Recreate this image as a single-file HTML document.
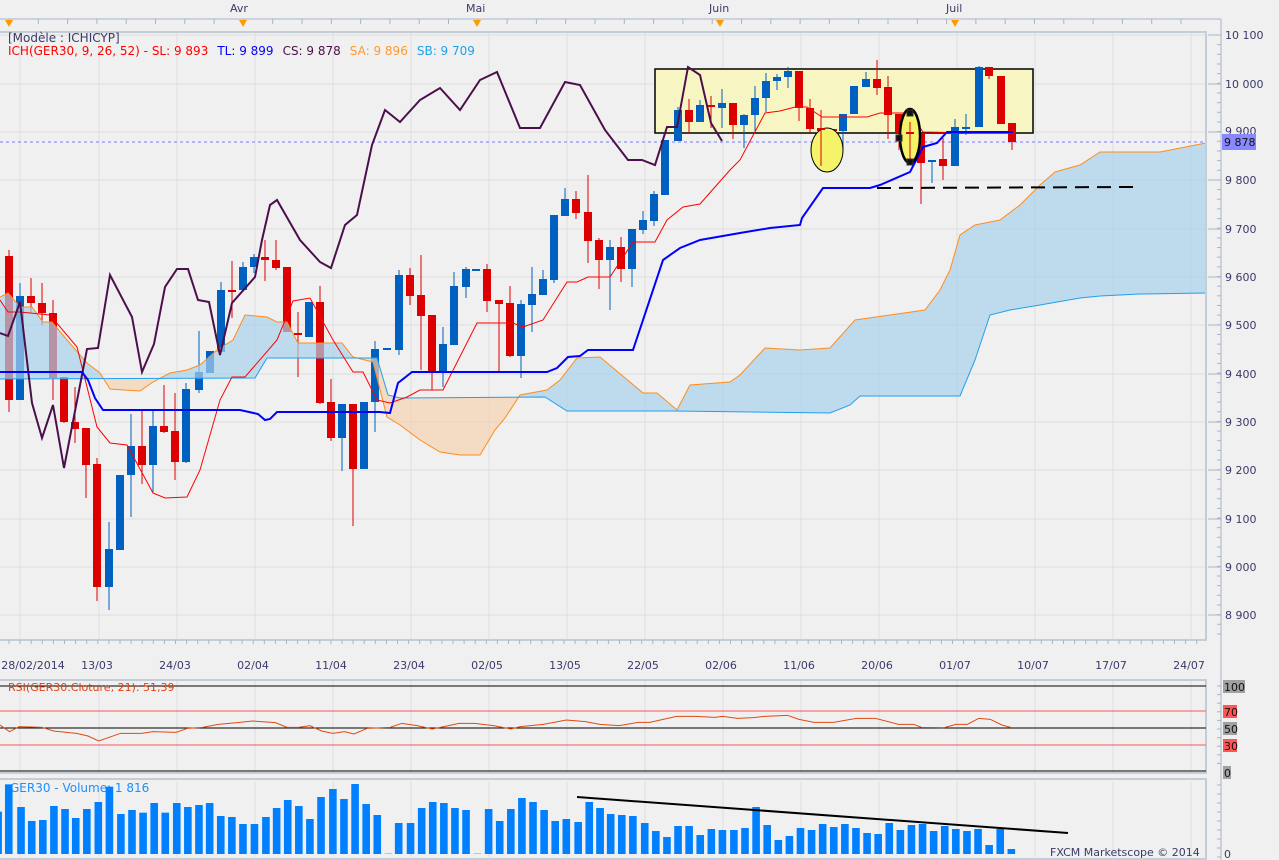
<!DOCTYPE html>
<html><head><meta charset="utf-8"><style>
html,body{margin:0;padding:0;background:#f0f0f0;width:1279px;height:860px;overflow:hidden}
svg{display:block;font-family:"DejaVu Sans","Liberation Sans",sans-serif}
</style></head><body>
<svg id="s" width="1279" height="860" viewBox="0 0 1279 860" xmlns="http://www.w3.org/2000/svg">
<defs>
<clipPath id="plot"><rect x="0" y="32" width="1206" height="608"/></clipPath>
</defs>
<rect width="1279" height="860" fill="#f0f0f0"/>
<g id="grid"></g>
<g clip-path="url(#plot)" id="pg">
<g id="cloud"></g>
<g id="candles"></g>
<g id="lines"></g>
<g id="ann"></g>
</g>
<g id="axes"></g>
<g font-size="11" fill="#3a3a6a">
<text x="230" y="12">Avr</text><text x="466" y="12">Mai</text><text x="709" y="12">Juin</text><text x="946" y="12">Juil</text>
</g>
<text x="8" y="42" font-size="12" fill="#3a3a6a">[Modèle : ICHICYP]</text>
<text y="55" font-size="12"><tspan x="8" fill="#ff0000">ICH(GER30, 9, 26, 52) -  SL: 9 893</tspan><tspan dx="9" fill="#0000ff">TL: 9 899</tspan><tspan dx="9" fill="#4b0f4b">CS: 9 878</tspan><tspan dx="9" fill="#ff9933">SA: 9 896</tspan><tspan dx="9" fill="#1ea0ef">SB: 9 709</tspan></text>
<g font-size="11" fill="#3a3a6a" id="plabels"></g>
<g font-size="11" fill="#3a3a6a" text-anchor="middle">
<text x="33" y="669">28/02/2014</text><text x="97" y="669">13/03</text><text x="175" y="669">24/03</text><text x="253" y="669">02/04</text><text x="331" y="669">11/04</text><text x="409" y="669">23/04</text><text x="487" y="669">02/05</text><text x="565" y="669">13/05</text><text x="643" y="669">22/05</text><text x="721" y="669">02/06</text><text x="799" y="669">11/06</text><text x="877" y="669">20/06</text><text x="955" y="669">01/07</text><text x="1033" y="669">10/07</text><text x="1111" y="669">17/07</text><text x="1189" y="669">24/07</text>
</g>
<rect x="1222" y="134" width="34" height="16" fill="#8888ff"/>
<text x="1224" y="146" font-size="11" fill="#111">9 878</text>
<rect x="1223" y="680" width="22" height="13" fill="#a0a0a0"/><text x="1224" y="691" font-size="11" fill="#111">100</text>
<rect x="1223" y="705" width="14" height="13" fill="#ff5555"/><text x="1224" y="716" font-size="11" fill="#111">70</text>
<rect x="1223" y="722" width="14" height="13" fill="#a0a0a0"/><text x="1224" y="733" font-size="11" fill="#111">50</text>
<rect x="1223" y="739" width="14" height="13" fill="#ff5555"/><text x="1224" y="750" font-size="11" fill="#111">30</text>
<rect x="1223" y="766" width="8" height="13" fill="#a0a0a0"/><text x="1224" y="777" font-size="11" fill="#111">0</text>
<text x="1224" y="858" font-size="11" fill="#3a3a6a">0</text>
<text x="8" y="691" font-size="11" fill="#e04010">RSI(GER30.Cloture, 21): 51,39</text>
<text x="10" y="792" font-size="12" fill="#1e8fff">GER30 - Volume: 1 816</text>
<g id="vol"></g>
<text x="1050" y="856" font-size="11" fill="#3a3a6a">FXCM Marketscope © 2014</text>
</svg>
<script>
var NS="http://www.w3.org/2000/svg";
function el(p,t,a){var e=document.createElementNS(NS,t);for(var k in a)e.setAttribute(k,a[k]);document.getElementById(p).appendChild(e);return e;}
function pts(a){return a.map(function(p){return p[0]+","+p[1]}).join(" ");}
var vx=[20,99,177,255,333,411,489,567,645,723,801,879,957,1035,1113,1191];
vx.forEach(function(x){el("grid","line",{x1:x,y1:32,x2:x,y2:640,stroke:"#dedede"});el("grid","line",{x1:x,y1:681,x2:x,y2:772,stroke:"#dedede"});el("grid","line",{x1:x,y1:781,x2:x,y2:857,stroke:"#dedede"});});
var pl=[["10 100",35],["10 000",84],["9 900",132],["9 800",180],["9 700",229],["9 600",277],["9 500",325],["9 400",374],["9 300",422],["9 200",470],["9 100",519],["9 000",567],["8 900",615]];
pl.forEach(function(p){el("grid","line",{x1:0,y1:p[1],x2:1206,y2:p[1],stroke:"#dedede"});
 var t=el("plabels","text",{x:1225,y:p[1]+(p[0]=="9 900"?3:4)});t.textContent=p[0];
 el("axes","line",{x1:1208,y1:p[1],x2:1221,y2:p[1],stroke:"#a8b4c4"});});
for(var y=35;y<640;y+=9.66){el("axes","line",{x1:1217,y1:y,x2:1221,y2:y,stroke:"#a8b4c4"});}
for(var y=686;y<772;y+=8.6){el("axes","line",{x1:1217,y1:y,x2:1221,y2:y,stroke:"#a8b4c4"});}
for(var y=785;y<858;y+=9){el("axes","line",{x1:1217,y1:y,x2:1221,y2:y,stroke:"#a8b4c4"});}
el("axes","line",{x1:0,y1:19,x2:1221,y2:19,stroke:"#a8b4c4"});
el("axes","line",{x1:1221,y1:19,x2:1221,y2:860,stroke:"#a8b4c4"});
for(var x=9;x<1206;x+=29.3){el("axes","line",{x1:x,y1:19,x2:x,y2:24,stroke:"#a8b4c4"});}
el("axes","rect",{x:-1,y:32,width:1207,height:608,fill:"none",stroke:"#c4ccd8","stroke-width":2});
el("axes","rect",{x:-1,y:680,width:1207,height:93,fill:"none",stroke:"#c4ccd8","stroke-width":2});
el("axes","rect",{x:-1,y:779,width:1207,height:80,fill:"none",stroke:"#c4ccd8","stroke-width":2});
for(var x=9;x<1206;x+=11.1){el("axes","line",{x1:x,y1:640,x2:x,y2:644,stroke:"#a8b4c4"});}
[9,243,477,720,955].forEach(function(x){el("axes","polygon",{points:(x-4)+",20 "+(x+4)+",20 "+x+",27",fill:"#ff9900"});});
var SA=[[0,297],[8,293],[20,307],[32,307],[43,322],[52,322],[67,340],[87,363],[100,373],[110,389],[140,391],[153,382],[170,373],[187,370],[200,365],[217,350],[233,340],[245,315],[267,317],[277,322],[287,322],[298,343],[342,343],[353,357],[373,362],[387,417],[400,425],[420,440],[440,452],[460,455],[480,455],[495,430],[505,418],[520,395],[547,390],[560,380],[577,358],[600,357],[643,393],[657,393],[677,410],[690,385],[730,382],[740,375],[765,348],[800,350],[830,348],[855,320],[890,315],[925,310],[940,290],[950,270],[960,235],[975,225],[1000,220],[1020,205],[1040,185],[1055,172],[1080,165],[1100,152],[1160,152],[1206,143]];
var SB=[[0,379],[255,378],[267,358],[377,358],[388,395],[400,398],[545,397],[567,411],[673,411],[830,413],[850,405],[860,396],[960,396],[975,360],[990,315],[1010,310],[1040,305],[1080,298],[1100,296],[1140,294],[1206,293]];
var d=document.getElementById("s").querySelector("defs");
function clip(id,p){var c=document.createElementNS(NS,"clipPath");c.setAttribute("id",id);var q=document.createElementNS(NS,"polygon");q.setAttribute("points",pts(p));c.appendChild(q);d.appendChild(c);}
clip("cu",SB.concat([[1206,0],[0,0]]));clip("cd",SB.concat([[1206,700],[0,700]]));
var poly=pts(SA.concat(SB.slice().reverse()));
var R="#dd0000",B="#0060c0";
var C=[[9,256,400,250,412,R],[20,296,400,283,400,B],[31,296,303,278,313,R],[42,303,313,283,325,R],[53,313,378,300,400,R],[64,377,422,377,423,R],[75,422,429,387,443,R],[86,428,465,428,498,R],[97,464,587,458,601,R],[109,549,587,522,610,B],[120,475,550,475,517,B],[131,446,475,414,517,B],[142,446,465,409,484,R],[153,426,465,411,492,B],[164,426,432,385,433,R],[175,431,462,393,480,R],[186,389,462,383,463,B],[199,372,390,331,393,B],[210,351,373,351,373,B],[221,290,352,282,352,B],[232,290,292,261,318,R],[243,267,290,262,292,B],[254,257,267,254,273,B],[265,257,260,240,281,R],[276,260,268,240,270,R],[287,267,332,267,326,R],[298,333,335,312,377,R],[309,302,337,302,337,B],[320,302,403,286,404,R],[331,402,438,379,441,R],[342,404,438,404,471,B],[353,404,469,404,526,R],[364,402,469,402,469,B],[375,349,402,341,432,B],[387,348,350,348,350,B],[399,275,350,270,355,B],[410,275,296,268,305,R],[421,295,316,255,370,R],[432,315,371,315,390,R],[443,344,371,327,387,B],[454,286,345,272,345,B],[466,269,287,267,298,B],[476,269,270,269,270,B],[487,269,301,264,312,R],[499,300,304,300,372,R],[510,303,356,286,357,R],[521,304,356,300,378,B],[532,294,305,267,332,B],[543,279,295,270,295,B],[554,215,280,215,283,B],[565,199,216,188,216,B],[576,199,213,191,219,R],[588,212,241,175,263,R],[599,240,260,238,289,R],[610,247,260,240,310,B],[621,247,269,237,282,R],[632,229,269,229,287,B],[643,220,230,211,234,B],[654,194,221,191,226,B],[665,140,195,140,195,B],[678,110,141,107,141,B],[689,110,122,99,133,R],[700,105,122,100,122,B],[711,105,107,96,128,R],[722,103,108,89,128,B],[733,103,125,103,139,R],[744,115,125,114,148,B],[755,98,115,86,132,B],[766,81,98,73,112,B],[777,77,81,74,90,B],[788,71,77,67,88,B],[799,71,108,71,121,R],[810,108,129,99,133,R],[821,129,131,110,166,R],[833,129,131,129,145,R],[843,114,131,114,150,B],[854,86,114,86,114,B],[866,79,87,72,87,B],[877,79,88,60,95,R],[888,87,115,76,139,R],[899,114,133,114,150,R],[910,132,134,120,160,R],[921,133,163,133,204,R],[932,160,162,160,183,B],[943,159,166,138,180,R],[955,127,166,119,166,B],[966,127,128,114,135,B],[979,67,127,66,127,B],[989,67,76,67,79,R],[1001,76,124,76,124,R],[1012,123,142,123,150,R]];
C.forEach(function(c){el("candles","line",{x1:c[0],y1:c[3],x2:c[0],y2:c[4],stroke:c[5],"stroke-width":1});
 el("candles","rect",{x:c[0]-4,y:c[1],width:8,height:Math.max(2,c[2]-c[1]),fill:c[5]});});
// cloud drawn over candles semi-transparent (multiply look)
el("lines","polygon",{points:poly,fill:"#a8d2ec","fill-opacity":"0.7","clip-path":"url(#cu)"});
el("lines","polygon",{points:poly,fill:"#f5d2b0","fill-opacity":"0.7","clip-path":"url(#cd)"});
el("lines","polyline",{points:pts(SA),fill:"none",stroke:"#ff8c1a","stroke-width":1});
el("lines","polyline",{points:pts(SB),fill:"none",stroke:"#1ea0ef","stroke-width":1});
el("cloud","rect",{x:655,y:69,width:378,height:64,fill:"#f7f5c2",stroke:"#000","stroke-width":1.5});
el("cloud","line",{x1:0,y1:142,x2:1206,y2:142,stroke:"#7777ff","stroke-dasharray":"3,3"});
var TK=[[0,300],[8,312],[20,312],[50,315],[77,347],[97,427],[110,443],[127,445],[153,493],[165,498],[187,497],[200,470],[220,400],[232,377],[245,377],[277,340],[293,301],[310,298],[333,340],[353,372],[363,372],[377,400],[390,403],[407,397],[420,390],[443,390],[477,323],[513,323],[523,327],[543,320],[567,282],[577,282],[588,277],[610,277],[633,242],[655,242],[667,220],[683,207],[700,204],[730,170],[740,160],[765,113],[780,111],[795,107],[807,107],[822,117],[867,117],[880,113],[908,113],[917,123],[923,132],[977,133],[1010,133]];
var KJ=[[0,372],[82,372],[88,380],[95,398],[103,410],[240,410],[258,414],[265,420],[270,419],[277,412],[380,412],[390,413],[398,383],[412,372],[547,372],[557,368],[568,357],[580,356],[588,350],[633,350],[663,260],[680,248],[700,240],[740,233],[770,228],[800,225],[802,218],[823,188],[870,188],[880,185],[910,172],[923,147],[937,143],[947,132],[1013,132]];
var CS=[[0,333],[8,336],[20,302],[32,403],[42,438],[53,405],[64,468],[87,349],[98,348],[110,275],[132,317],[142,372],[154,344],[165,287],[177,269],[188,269],[198,300],[209,302],[220,355],[232,303],[255,277],[262,240],[270,205],[277,200],[300,240],[320,262],[331,268],[345,225],[357,215],[372,145],[385,110],[400,122],[420,100],[440,88],[460,110],[480,80],[497,72],[520,128],[540,128],[565,82],[580,85],[605,130],[628,160],[642,160],[655,165],[667,127],[677,127],[688,67],[700,75],[711,123],[722,141]];
el("lines","polyline",{points:pts(TK),fill:"none",stroke:"#ff0000","stroke-width":1});
el("lines","polyline",{points:pts(CS),fill:"none",stroke:"#4b0f4b","stroke-width":2});
el("lines","polyline",{points:pts(KJ),fill:"none",stroke:"#0000ff","stroke-width":2});
el("ann","ellipse",{cx:827,cy:150,rx:16,ry:22,fill:"#f5f36a",stroke:"#000","stroke-width":1});
el("ann","line",{x1:821,y1:128,x2:821,y2:166,stroke:R});el("ann","rect",{x:817,y:128,width:8,height:2,fill:R});
el("ann","ellipse",{cx:910,cy:136,rx:10,ry:27,fill:"#f5f36a",stroke:"#000","stroke-width":2.5});
el("ann","line",{x1:910,y1:122,x2:910,y2:160,stroke:R});el("ann","rect",{x:906,y:132,width:8,height:2,fill:R});
[[910,113],[899,138],[910,162]].forEach(function(p){el("ann","rect",{x:p[0]-3,y:p[1]-3,width:6,height:6,fill:"#111",stroke:"#333"});});
el("ann","line",{x1:877,y1:188,x2:1135,y2:187,stroke:"#000","stroke-width":2,"stroke-dasharray":"14,8"});
el("axes","line",{x1:0,y1:686,x2:1206,y2:686,stroke:"#000"});
el("axes","line",{x1:0,y1:711,x2:1206,y2:711,stroke:"#ff5555"});
el("axes","line",{x1:0,y1:728,x2:1206,y2:728,stroke:"#000"});
el("axes","line",{x1:0,y1:745,x2:1206,y2:745,stroke:"#ff5555"});
el("axes","line",{x1:0,y1:771,x2:1206,y2:771,stroke:"#000"});
var K=600/1568;
var r1=[[0,150],[25,170],[50,155],[110,157],[140,168],[200,175],[230,183],[258,198],[290,185],[315,175],[370,175],[400,170],[460,172],[490,160],[530,157],[570,148],[620,143],[660,138],[720,143],[750,157],[780,157],[810,152],[840,168],[870,175],[900,170],[925,177],[960,160],[1020,157],[1050,145],[1090,152],[1130,162],[1160,155],[1200,145],[1240,145],[1290,152],[1335,162],[1360,155],[1420,148],[1480,135],[1530,140],[1568,148]].map(function(p){return [p[0]*K,p[1]/3+675]});
var r2=[[50,152],[100,142],[130,142],[200,124],[250,124],[300,127],[320,124],[360,130],[400,128],[430,124],[490,121],[520,133],[560,142],[610,142],[670,130],[720,130],[780,148],[820,148],[840,157],[900,158],[930,148],[960,148],[990,130],[1020,133],[1050,150],[1075,158]].map(function(p){return [p[0]*K+600,p[1]/3+675]});
el("axes","polyline",{points:pts(r1.concat(r2)),fill:"none",stroke:"#e04a10","stroke-width":1});
var vb=[[0,410,5],[13,328],[45,396],[73,438],[102,435],[131,393],[160,402],[188,429],[217,402],[247,381],[276,335],[306,417],[335,405],[364,413],[393,384],[422,413],[452,384],[481,396],[510,390],[538,384],[567,423],[596,426],[625,447],[655,447],[685,426],[713,399],[742,375],[771,393],[800,432],[829,366],[860,342],[889,372],[918,327],[947,387],[976,420],[1005,536],[1032,444],[1063,444],[1092,399],[1121,381],[1150,384],[1179,399],[1208,405],[1238,536],[1267,402],[1296,438],[1325,402],[1354,369],[1383,381],[1412,405],[1441,438],[1470,432],[1501,441],[1530,381],[1558,399]];
vb.forEach(function(b){var x=b[0]*K,w=b[2]?b[2]*K:7.6,y=b[1]/3+675;el("vol","rect",{x:x,y:y,width:w,height:854-y,fill:"#0080ff"});});
var vb2=[[0,399,10],[18,417],[47,420],[76,423],[107,444],[136,468],[165,486],[194,453],[223,453],[252,480],[281,462],[310,465],[340,465],[369,459],[398,396],[427,450],[456,495],[485,483],[514,459],[543,465],[572,447],[601,456],[630,447],[659,459],[688,474],[717,477],[746,444],[775,465],[804,450],[833,447],[862,468],[891,453],[920,462],[949,468],[978,462],[1007,510],[1036,462],[1065,522]];
vb2.forEach(function(b){var x=b[0]*K+600,w=b[2]?b[2]*K:7.6,y=b[1]/3+675;el("vol","rect",{x:x,y:y,width:w,height:854-y,fill:"#0080ff"});});
el("vol","line",{x1:577,y1:797,x2:1068,y2:833,stroke:"#000","stroke-width":2});
</script>
</body></html>
